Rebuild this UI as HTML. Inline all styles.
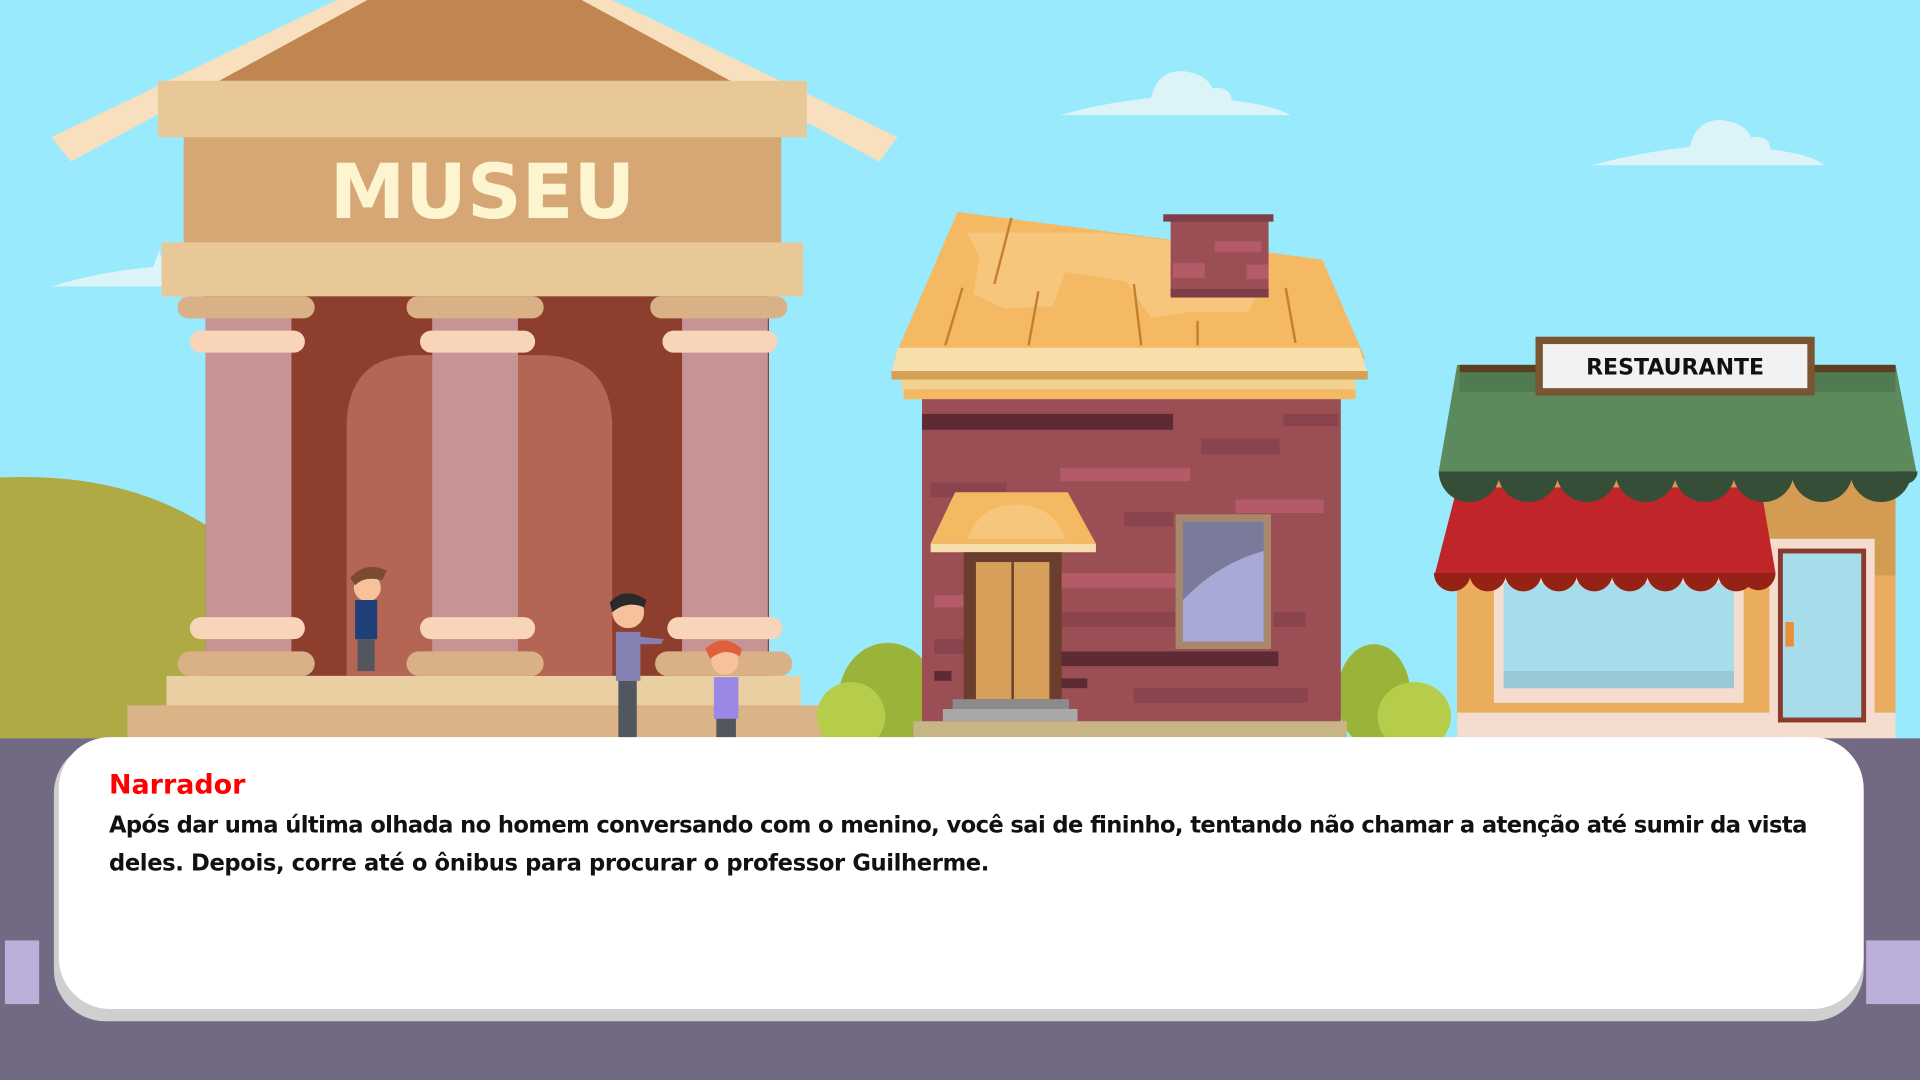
<!DOCTYPE html>
<html><head><meta charset="utf-8"><style>html,body{margin:0;padding:0;overflow:hidden;background:#726a82}svg{display:block}</style></head><body>
<svg width="1920" height="1080" viewBox="0 0 1568 882" xmlns="http://www.w3.org/2000/svg" preserveAspectRatio="none">
<defs>
<clipPath id="gc"><rect x="1170" y="385" width="400" height="40"/></clipPath>
<clipPath id="rc"><rect x="1165" y="468" width="290" height="30"/></clipPath>
</defs>
<rect width="1568" height="882" fill="#9aeafd"/>
<g fill="#daf4f7">
<path d="M866 94 Q900 84 940 80 Q945 58 965 58 Q985 60 990 72 Q1005 70 1006 82 Q1040 86 1054 94Z"/>
<path d="M1300 135 Q1340 124 1380 120 Q1385 98 1405 98 Q1425 100 1430 112 Q1445 110 1446 122 Q1480 126 1490 135Z"/>
<path d="M42 234 Q80 222 125 218 L130 205 L140 234Z"/>
</g>
<path d="M0 390 Q100 385 170 430 L170 603 L0 603Z" fill="#b0aa45"/>
<!-- museum -->
<polygon points="290,0 485,0 600,66 175,66" fill="#c08551"/>
<polygon points="42,112 275,0 300,0 58,132" fill="#f8dfbd"/>
<polygon points="733,112 500,0 475,0 718,132" fill="#f8dfbd"/>
<rect x="129" y="66" width="530" height="46" fill="#e8c897"/>
<rect x="150" y="112" width="488" height="86" fill="#d6a774"/>
<text x="394" y="178" font-family="DejaVu Sans, sans-serif" font-weight="bold" font-size="62" fill="#fdf5cf" text-anchor="middle">MUSEU</text>
<rect x="132" y="198" width="524" height="44" fill="#e8c897"/>
<rect x="168" y="242" width="460" height="310" fill="#8d3e2d"/>
<path d="M283 552 L283 350 Q283 290 340 290 L440 290 Q500 290 500 350 L500 552Z" fill="#b46554"/>
<g fill="#c79495"><rect x="168" y="255" width="70" height="295"/><rect x="353" y="255" width="70" height="295"/><rect x="557" y="255" width="70" height="295"/></g>
<g fill="#dab186"><rect x="145" y="242" width="112" height="18" rx="9"/><rect x="332" y="242" width="112" height="18" rx="9"/><rect x="531" y="242" width="112" height="18" rx="9"/>
<rect x="145" y="532" width="112" height="20" rx="10"/><rect x="332" y="532" width="112" height="20" rx="10"/><rect x="535" y="532" width="112" height="20" rx="10"/></g>
<g fill="#f8d4b8"><rect x="155" y="270" width="94" height="18" rx="9"/><rect x="343" y="270" width="94" height="18" rx="9"/><rect x="541" y="270" width="94" height="18" rx="9"/>
<rect x="155" y="504" width="94" height="18" rx="9"/><rect x="343" y="504" width="94" height="18" rx="9"/><rect x="545" y="504" width="94" height="18" rx="9"/></g>
<rect x="136" y="552" width="518" height="26" fill="#eacfa3"/>
<rect x="104" y="576" width="584" height="27" fill="#dbb388"/>
<g><circle cx="300" cy="480" r="11" fill="#f6c29b"/><path d="M286 472 Q298 458 316 466 L312 474 Q298 470 290 478Z" fill="#7b4a32"/><rect x="290" y="490" width="18" height="32" fill="#1f3f78"/><rect x="292" y="522" width="14" height="26" fill="#51565f"/></g>
<g><circle cx="513" cy="500" r="13" fill="#f6c29b"/><path d="M498 492 Q510 478 528 490 L526 496 Q512 490 500 500Z" fill="#2a2a2a"/><rect x="503" y="516" width="20" height="40" fill="#8580b2"/><path d="M522 520 L542 522 L540 526 L522 526Z" fill="#8580b2"/><rect x="505" y="556" width="15" height="47" fill="#51565f"/></g>
<g><circle cx="592" cy="540" r="11" fill="#f6c29b"/><path d="M576 530 Q590 516 606 530 L604 536 Q592 528 580 538Z" fill="#e0603e"/><rect x="583" y="553" width="20" height="34" fill="#9b87e4"/><rect x="585" y="587" width="16" height="16" fill="#51565f"/></g>
<g fill="#9ab43a"><ellipse cx="725" cy="570" rx="40" ry="45"/><ellipse cx="695" cy="585" rx="28" ry="28" fill="#b5cd4a"/><ellipse cx="1122" cy="568" rx="30" ry="42"/><ellipse cx="1155" cy="585" rx="30" ry="28" fill="#b5cd4a"/></g>
<!-- house -->
<rect x="753" y="318" width="342" height="285" fill="#9b4e54"/>
<g fill="#5e2b34"><rect x="753" y="338" width="205" height="13"/><rect x="866" y="532" width="178" height="12"/><rect x="763" y="548" width="14" height="8"/><rect x="866" y="554" width="22" height="8"/></g>
<g fill="#b45b67"><rect x="866" y="382" width="106" height="11"/><rect x="1009" y="408" width="72" height="11"/><rect x="866" y="468" width="94" height="12"/><rect x="763" y="486" width="24" height="10"/></g>
<g fill="#8a444d"><rect x="981" y="358" width="64" height="13"/><rect x="1048" y="338" width="45" height="10"/><rect x="760" y="394" width="62" height="12"/><rect x="918" y="418" width="40" height="12"/><rect x="926" y="562" width="142" height="12"/><rect x="866" y="500" width="94" height="12"/><rect x="1040" y="500" width="26" height="12"/><rect x="763" y="522" width="24" height="12"/></g>
<polygon points="782,173 1080,212 1115,293 730,293" fill="#f4b962"/>
<path d="M790 190 L800 210 L795 240 L820 252 L860 250 L870 222 L920 230 L940 260 L970 255 L1020 255 L1030 230 L1030 205 L900 190Z" fill="#f6c67c"/>
<g stroke="#c57f32" stroke-width="2"><line x1="812" y1="232" x2="826" y2="178"/><line x1="772" y1="282" x2="786" y2="235"/><line x1="840" y1="282" x2="848" y2="238"/><line x1="932" y1="282" x2="926" y2="232"/><line x1="1050" y1="235" x2="1058" y2="280"/><line x1="978" y1="282" x2="978" y2="262"/></g>
<rect x="956" y="178" width="80" height="64" fill="#9b4e54"/><rect x="950" y="175" width="90" height="6" fill="#7e3e48"/><rect x="956" y="236" width="80" height="7" fill="#7e3e48"/>
<g fill="#b45b67"><rect x="992" y="197" width="38" height="9"/><rect x="958" y="215" width="26" height="12"/><rect x="1018" y="216" width="18" height="12"/></g>
<polygon points="733,284 1110,284 1117,305 728,305" fill="#f6dfad"/>
<rect x="728" y="303" width="389" height="7" fill="#d6a155"/>
<rect x="736" y="310" width="371" height="8" fill="#f1d190"/>
<rect x="738" y="318" width="369" height="8" fill="#f4b962"/>
<rect x="960" y="420" width="78" height="110" fill="#a8876a"/>
<rect x="966" y="426" width="66" height="98" fill="#7a7b9a"/>
<path d="M966 524 L966 490 Q995 460 1032 450 L1032 524Z" fill="#a8a9d6"/>
<polygon points="780,402 872,402 895,444 760,444" fill="#f4b962"/>
<path d="M790 440 Q800 412 830 412 Q860 412 870 440Z" fill="#f6c67c"/>
<rect x="760" y="444" width="135" height="7" fill="#f6dfad"/>
<rect x="787" y="451" width="80" height="120" fill="#6a3d2c"/>
<rect x="797" y="459" width="60" height="112" fill="#d6a05a"/>
<line x1="827" y1="459" x2="827" y2="571" stroke="#6a3d2c" stroke-width="2"/>
<rect x="778" y="571" width="95" height="8" fill="#8b8b8b"/><rect x="770" y="579" width="110" height="10" fill="#a8a8a8"/>
<rect x="746" y="589" width="354" height="14" fill="#c8b585"/>
<!-- restaurant -->
<rect x="1190" y="390" width="358" height="213" fill="#d49c52"/>
<rect x="1190" y="470" width="358" height="120" fill="#e9ad5d"/>
<rect x="1190" y="582" width="358" height="21" fill="#f4dccf"/>
<rect x="1220" y="470" width="204" height="104" fill="#f4dccf"/>
<rect x="1228" y="476" width="188" height="86" fill="#a7dcea"/>
<rect x="1228" y="548" width="188" height="14" fill="#98c8d6"/>
<rect x="1445" y="440" width="86" height="150" fill="#f4dccf"/>
<rect x="1452" y="448" width="72" height="142" fill="#8b3b2b"/>
<rect x="1456" y="452" width="64" height="134" fill="#a7dcea"/>
<rect x="1458" y="508" width="7" height="20" fill="#e98f3a"/>
<polygon points="1190,398 1438,398 1450,468 1172,468" fill="#c02629"/>
<g fill="#962216" clip-path="url(#rc)">
<circle cx="1186" cy="468" r="15"/><circle cx="1215" cy="468" r="15"/><circle cx="1244" cy="468" r="15"/><circle cx="1273" cy="468" r="15"/><circle cx="1302" cy="468" r="15"/><circle cx="1331" cy="468" r="15"/><circle cx="1360" cy="468" r="15"/><circle cx="1389" cy="468" r="15"/><circle cx="1418" cy="468" r="15"/><circle cx="1436" cy="468" r="14"/></g>
<polygon points="1190,298 1548,298 1565,385 1175,385" fill="#5c8a5c"/>
<rect x="1192" y="298" width="356" height="22" fill="#4f7a52"/>
<rect x="1192" y="298" width="356" height="6" fill="#5a3f22"/>
<g fill="#364d38" clip-path="url(#gc)">
<circle cx="1200" cy="385" r="25"/><circle cx="1248" cy="385" r="25"/><circle cx="1296" cy="385" r="25"/><circle cx="1344" cy="385" r="25"/><circle cx="1392" cy="385" r="25"/><circle cx="1440" cy="385" r="25"/><circle cx="1488" cy="385" r="25"/><circle cx="1536" cy="385" r="25"/><circle cx="1556" cy="385" r="10"/></g>
<rect x="1254" y="275" width="228" height="48" fill="#795532"/>
<rect x="1260" y="281" width="216" height="36" fill="#f2f2f2"/>
<text x="1368" y="306" font-family="DejaVu Sans, sans-serif" font-weight="bold" font-size="18" fill="#111" text-anchor="middle">RESTAURANTE</text>
<rect x="0" y="603" width="1568" height="279" fill="#726a82"/>
<rect x="4" y="768" width="28" height="52" fill="#bcafd9"/>
<rect x="1524" y="768" width="44" height="52" fill="#bcafd9"/>
<rect x="44" y="606" width="1478" height="228" rx="42" fill="#cfcfcf"/>
<rect x="48" y="602" width="1474" height="222" rx="42" fill="#fff"/>
<text x="89" y="648" font-family="'Comic Sans MS','DejaVu Sans',sans-serif" font-weight="bold" font-size="22" fill="#ff0000">Narrador</text>
<g font-family="'Comic Sans MS','DejaVu Sans',sans-serif" font-weight="bold" font-size="18.5" fill="#111">
<text x="89" y="680" textLength="1387" lengthAdjust="spacing">Após dar uma última olhada no homem conversando com o menino, você sai de fininho, tentando não chamar a atenção até sumir da vista</text>
<text x="89" y="711" textLength="719" lengthAdjust="spacing">deles. Depois, corre até o ônibus para procurar o professor Guilherme.</text>
</g>
</svg>
</body></html>
